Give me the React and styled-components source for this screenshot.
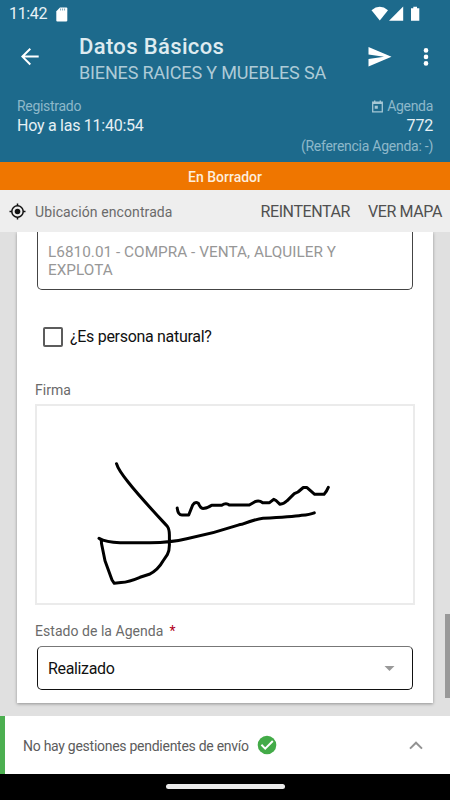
import React from 'react';
import styled, { createGlobalStyle } from 'styled-components';

const GlobalStyle = createGlobalStyle`
  * { box-sizing: border-box; }
  body { margin: 0; background: #000; }
`;

const Screen = styled.div`
  width: 450px;
  height: 800px;
  display: flex;
  flex-direction: column;
  overflow: hidden;
  background: #e0e0e0;
  font-family: Roboto, "Noto Sans", sans-serif;
`;

const Text = styled.span`
  display: block;
  white-space: nowrap;
  font-size: ${(p) => p.$size}px;
  line-height: ${(p) => p.$line || 18}px;
  color: ${(p) => p.$color};
  font-weight: ${(p) => p.$weight || 400};
  letter-spacing: ${(p) => p.$track || 0}px;
`;

const LocationText = styled(Text)`
  margin-left: 9px;
`;

const Icon = styled.svg`
  display: block;
  flex: none;
`;

const SdIcon = styled(Icon)`
  margin-left: 9px;
`;

const Header = styled.header`
  height: 162px;
  flex: none;
  background: #1d6a8c;
`;

const StatusBar = styled.div`
  height: 28px;
  display: flex;
  align-items: center;
  padding: 0 30px 0 9px;
`;

const StatusIcons = styled.div`
  display: flex;
  margin-left: auto;
`;

const Toolbar = styled.div`
  height: 58px;
  display: flex;
  align-items: center;
  padding: 0 12px 0 18px;
`;

const Titles = styled.div`
  flex: 1;
  padding: 6px 0 0 37px;
`;

const Actions = styled.div`
  display: flex;
  align-items: center;
  gap: 22px;
`;

const Summary = styled.div`
  display: flex;
  justify-content: space-between;
  padding: 11px 17px 0 17px;
`;

const SummaryColumn = styled.div`
  display: flex;
  flex-direction: column;
  align-items: ${(p) => (p.$end ? 'flex-end' : 'flex-start')};
  gap: 1px;
`;

const IconLabel = styled.div`
  display: flex;
  align-items: center;
  gap: 4px;
`;

const Banner = styled.div`
  height: 28px;
  flex: none;
  display: flex;
  align-items: center;
  justify-content: center;
  padding-top: 2px;
  background: #ef7600;
`;

const LocationBar = styled.div`
  height: 42px;
  flex: none;
  display: flex;
  align-items: center;
  padding: 1px 8px 0 9px;
  background: #eee;
`;

const LocationActions = styled.div`
  display: flex;
  gap: 18px;
  margin-left: auto;
`;

const ScrollArea = styled.main`
  height: 484px;
  flex: none;
  display: flex;
  align-items: flex-start;
  justify-content: space-between;
  padding-left: 17px;
  overflow: hidden;
  background: #e0e0e0;
`;

const Card = styled.section`
  width: 416px;
  height: 471px;
  padding: 0 18px;
  background: #fff;
  box-shadow: 0 1px 3px rgba(0, 0, 0, 0.35);
`;

const ScrollThumb = styled.div`
  width: 5px;
  height: 84px;
  margin-top: 382px;
  background: #999;
`;

const ActivityField = styled.div`
  height: 58px;
  margin: 0 2px;
  padding: 11px 10px;
  border: 1px solid #444;
  border-top: 0;
  border-radius: 0 0 5px 5px;
`;

const CheckRow = styled.label`
  display: flex;
  align-items: center;
  gap: 7px;
  height: 21px;
  margin: 36px 0 0 8px;
`;

const CheckBox = styled.span`
  width: 20px;
  height: 20px;
  border: 2px solid #5c5c5c;
  border-radius: 2px;
`;

const FieldLabel = styled.div`
  display: flex;
  gap: 6px;
  margin-top: ${(p) => p.$top}px;
`;

const SignaturePad = styled.div`
  width: 380px;
  height: 201px;
  margin-top: 5px;
  border: 2px solid #ebebeb;
`;

const Select = styled.div`
  height: 44px;
  display: flex;
  align-items: center;
  justify-content: space-between;
  margin: 6px 2px 0;
  padding: 1px 17px 0 10px;
  border: 1px solid #111;
  border-top-color: #777;
  border-radius: 5px;
`;

const Footer = styled.footer`
  height: 58px;
  flex: none;
  display: flex;
  align-items: center;
  padding: 0 27px 0 18px;
  border-left: 5px solid #4caf50;
  background: #fff;
`;

const FooterStatus = styled.div`
  flex: 1;
  display: flex;
  align-items: center;
  gap: 8px;
`;

const FooterText = styled(Text)`
  padding-top: 1px;
`;

const NavBar = styled.nav`
  height: 26px;
  flex: none;
  display: flex;
  justify-content: center;
  padding-top: 10px;
  background: #000;
`;

const HomeHandle = styled.div`
  width: 119px;
  height: 5px;
  border-radius: 3px;
  background: #ebebeb;
`;

export default function App() {
  return (
    <>
      <GlobalStyle />
      <Screen>
        <Header>
          <StatusBar>
            <Text $size={16} $track={-0.35} $color="#e8f2f6">11:42</Text>
            <SdIcon width="12" height="15" viewBox="0 0 12 15">
              <path d="M4 .5H10.5Q11.3 .5 11.3 1.5V13.4Q11.3 14.5 10.2 14.5H1.3Q.3 14.5 .3 13.4V4.2Z" fill="#fff" />
              <path d="M4.6 1.5V3.5M6.6 1.5V3.5M8.6 1.5V3.5" stroke="#7aa6ba" strokeWidth="1" />
            </SdIcon>
            <StatusIcons>
              <Icon width="49" height="16" viewBox="371 5 49 16" fill="#fff">
                <path d="M371.5 9.2Q379.7 2.5 388 9.2L379.8 19.5Z" />
                <path d="M389 19.7H403.2V5.5Z" />
                <path d="M411 7.2H413.3V5.8H417V7.2H419.3V19.8H411Z" />
              </Icon>
            </StatusIcons>
          </StatusBar>
          <Toolbar>
            <Icon width="24" height="24" viewBox="0 0 24 24" fill="none" stroke="#fff" strokeWidth="2">
              <path d="M20.7 11.6H4.7M12.3 3.7L4.4 11.6L12.3 19.5" />
            </Icon>
            <Titles>
              <Text $size={22} $line={26} $weight={500} $track={0.36} $color="#deebf0">Datos Básicos</Text>
              <Text $size={18} $line={26} $track={-0.15} $color="#aecbd7">BIENES RAICES Y MUEBLES SA</Text>
            </Titles>
            <Actions>
              <Icon width="24" height="20" viewBox="0 0 24 20" fill="#fff">
                <path d="M.5 0L23.5 9.7L.5 19.4V12L16 9.7L.5 7.4Z" />
              </Icon>
              <Icon width="24" height="20" viewBox="0 0 24 20" fill="#fff">
                <circle cx="12" cy="3.4" r="2.3" />
                <circle cx="12" cy="9.9" r="2.3" />
                <circle cx="12" cy="16.4" r="2.3" />
              </Icon>
            </Actions>
          </Toolbar>
          <Summary>
            <SummaryColumn>
              <Text $size={14} $track={-0.3} $color="#8db8ca">Registrado</Text>
              <Text $size={16} $track={-0.26} $line={20} $color="#e6f0f4">Hoy a las 11:40:54</Text>
            </SummaryColumn>
            <SummaryColumn $end>
              <IconLabel>
                <Icon width="11" height="13" viewBox="0 0 11 13">
                  <path d="M.7 2.2H10.3V11.8H.7Z" fill="none" stroke="#a5c7d5" strokeWidth="1.3" />
                  <path d="M1 2H10V4H1ZM2 .5H3.4V2H2ZM7.6 .5H9V2H7.6ZM2.7 5.8H5.8V8.8H2.7Z" fill="#a5c7d5" />
                </Icon>
                <Text $size={14} $track={-0.3} $color="#8db8ca">Agenda</Text>
              </IconLabel>
              <Text $size={16} $track={-0.2} $line={20} $color="#e6f0f4">772</Text>
              <Text $size={14} $track={-0.26} $color="#8db8ca">(Referencia Agenda: -)</Text>
            </SummaryColumn>
          </Summary>
        </Header>
        <Banner>
          <Text $size={14} $weight={500} $color="#fdeedd">En Borrador</Text>
        </Banner>
        <LocationBar>
          <Icon width="17" height="17" viewBox="0 0 17 17" fill="none" stroke="#111" strokeWidth="1.5">
            <circle cx="8.5" cy="8.5" r="5.7" />
            <circle cx="8.5" cy="8.5" r="2.8" fill="#111" stroke="none" />
            <path d="M8.5 .5V3M8.5 14V16.5M.5 8.5H3M14 8.5H16.5" />
          </Icon>
          <LocationText $size={14} $track={0.1} $color="#6a6a6a">Ubicación encontrada</LocationText>
          <LocationActions>
            <Text $size={16} $track={-0.4} $color="#505050">REINTENTAR</Text>
            <Text $size={16} $track={-0.4} $color="#505050">VER MAPA</Text>
          </LocationActions>
        </LocationBar>
        <ScrollArea>
          <Card>
            <ActivityField>
              <Text $size={15.3} $track={0.04} $color="#979797">L6810.01 - COMPRA - VENTA, ALQUILER Y</Text>
              <Text $size={15.3} $track={0.04} $color="#979797">EXPLOTA</Text>
            </ActivityField>
            <CheckRow>
              <CheckBox />
              <Text $size={16} $line={20} $track={-0.3} $color="#111">¿Es persona natural?</Text>
            </CheckRow>
            <FieldLabel $top={34}>
              <Text $size={14} $color="#6a6a6a">Firma</Text>
            </FieldLabel>
            <SignaturePad>
              <Icon
                width="376" height="197" viewBox="37 406 376 197"
                fill="none" stroke="#000" strokeWidth="3" strokeLinecap="round" strokeLinejoin="round"
              >
                <path d="M116.5 463.7C118 469 124 477 128.3 482.3C139 496 155 513 167.3 526.3Q169.4 529 169.4 535V545Q169.4 551 167.3 554.7L163 561Q158 570 149.3 574.3L140 577.3Q129 582 121 582.6L114.3 583.3L112 580L105 560.7L101.5 543.5L101.3 540L99 538.3Q106 542.5 120 542.7H150Q171 542.5 186.7 538.7Q213 533.5 239 524.8L241.7 524.3Q256 519 263 518.3Q292 517 301.7 515.3Q310 514.5 314.3 512.8" />
                <path d="M177.2 508Q178 515 182 515H188.7L192.7 505Q195 501.3 198.3 503.2Q200.5 508.5 203 508.5Q207 508.5 211.7 505.3H221.7Q226 502.5 229.3 505H249.3L255 501.7Q259 499.8 262.7 502.7H269.5L273.7 499.3L276 500.5L280 504.3Q284 504 287 500.8L294.3 493.7L298 492L303.3 487.5L307 487.6L314.7 494.3H324L326.5 491L328.3 487.4" />
              </Icon>
            </SignaturePad>
            <FieldLabel $top={17}>
              <Text $size={14} $track={0.04} $color="#6a6a6a">Estado de la Agenda</Text>
              <Text $size={14} $color="#b00020">*</Text>
            </FieldLabel>
            <Select>
              <Text $size={16} $line={20} $track={-0.35} $color="#111">Realizado</Text>
              <Icon width="11" height="5" viewBox="0 0 11 5" fill="#999">
                <path d="M.5 0H10.5L5.5 5Z" />
              </Icon>
            </Select>
          </Card>
          <ScrollThumb />
        </ScrollArea>
        <Footer>
          <FooterStatus>
            <FooterText $size={14} $track={-0.27} $color="#5c5c5c">No hay gestiones pendientes de envío</FooterText>
            <Icon width="20" height="20" viewBox="0 0 20 20">
              <circle cx="10" cy="10" r="9.3" fill="#43ab48" />
              <path d="M4.4 9.8L8.2 13.6L15.8 6" fill="none" stroke="#fff" strokeWidth="2" />
            </Icon>
          </FooterStatus>
          <Icon width="14" height="9" viewBox="0 0 14 9" fill="none" stroke="#929292" strokeWidth="2">
            <path d="M1 7.6L7 1.7L13 7.6" />
          </Icon>
        </Footer>
        <NavBar>
          <HomeHandle />
        </NavBar>
      </Screen>
    </>
  );
}
